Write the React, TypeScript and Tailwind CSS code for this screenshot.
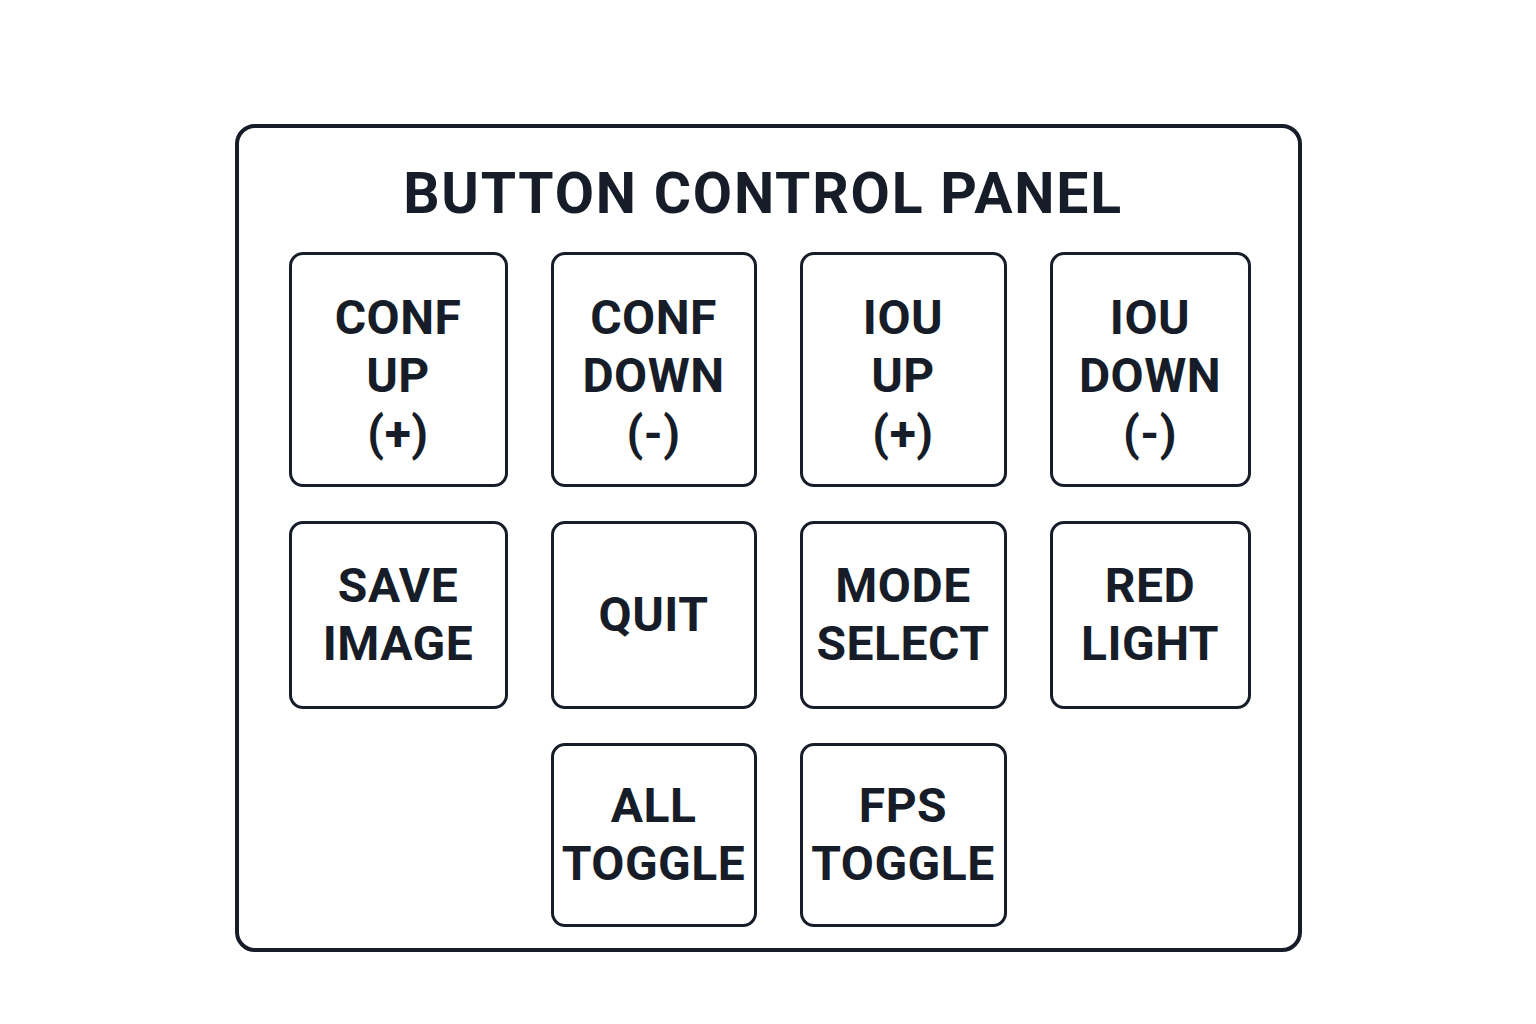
import React from 'react';

interface PanelButton {
  id: string;
  lines: string[];
  col: string;
}

const buttons: PanelButton[] = [
  { id: 'conf-up', lines: ['CONF', 'UP', '(+)'], col: 'col-start-1' },
  { id: 'conf-down', lines: ['CONF', 'DOWN', '(-)'], col: 'col-start-2' },
  { id: 'iou-up', lines: ['IOU', 'UP', '(+)'], col: 'col-start-3' },
  { id: 'iou-down', lines: ['IOU', 'DOWN', '(-)'], col: 'col-start-4' },
  { id: 'save', lines: ['SAVE', 'IMAGE'], col: 'col-start-1' },
  { id: 'quit', lines: ['QUIT'], col: 'col-start-2' },
  { id: 'mode', lines: ['MODE', 'SELECT'], col: 'col-start-3' },
  { id: 'red', lines: ['RED', 'LIGHT'], col: 'col-start-4' },
  { id: 'all', lines: ['ALL', 'TOGGLE'], col: 'col-start-2' },
  { id: 'fps', lines: ['FPS', 'TOGGLE'], col: 'col-start-3' },
];

const App: React.FC = () => {
  return (
    <div
      className="min-h-screen w-full bg-white flex justify-center pt-[124px]"
      style={{ fontFamily: 'Roboto, "Liberation Sans", sans-serif' }}
    >
      <div className="w-[1067px] h-[828px] border-4 border-[#161d29] rounded-[20px] flex flex-col items-center pt-[37px]">
        {/* Title */}
        <h1 className="mr-[10px] text-[57px] leading-none font-bold text-[#161d29] tracking-[1.8px]">
          BUTTON CONTROL PANEL
        </h1>

        {/* Button grid */}
        <div className="mt-[30px] ml-[3px] grid grid-cols-[219px_206px_207px_201px] grid-rows-[235px_188px_184px] gap-x-[43px] gap-y-[34px]">
          {buttons.map((b) => (
            <button
              key={b.id}
              className={`${b.col} flex flex-col items-center justify-center border-[3px] border-[#161d29] rounded-[14px] bg-white text-[#161d29] font-bold text-[48px] leading-[58px] tracking-[0.5px] ${b.lines.length === 3 ? 'pt-[12px]' : ''}`}
            >
              {b.lines.map((line) => (
                <span key={line}>{line}</span>
              ))}
            </button>
          ))}
        </div>
      </div>
    </div>
  );
};

export default App;
